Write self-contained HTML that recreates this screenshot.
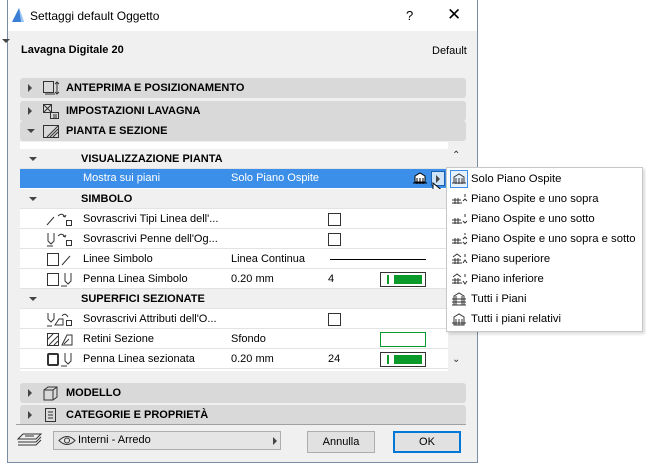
<!DOCTYPE html>
<html><head><meta charset="utf-8"><style>
*{margin:0;padding:0;box-sizing:border-box}
body{width:646px;height:463px;background:#fff;font-family:"Liberation Sans",sans-serif;font-size:11px;color:#000;position:relative;overflow:hidden}
.a{position:absolute}
.win{left:7px;top:0;width:471px;height:463px;border:1px solid #7a8ca3;border-top:none;background:#f0f0f0}
.title{left:8px;top:0;width:469px;height:31px;background:#fff}
.sec{position:absolute;left:20px;width:446px;height:20px;background:#d9d9d9;border-radius:3px;font-weight:bold;font-size:11px;line-height:20px}
.sec .t{position:absolute;left:46px}
.tri{position:absolute;width:0;height:0}
.tr{border-left:4px solid #444;border-top:4px solid transparent;border-bottom:4px solid transparent}
.td{border-top:4px solid #444;border-left:4px solid transparent;border-right:4px solid transparent}
.row{position:absolute;left:20px;width:428px;height:20px;line-height:20px;border-bottom:1px solid #e3e3e3;background:#fff}
.hdr{background:#f0f0f0;font-weight:bold}
.cb{position:absolute;left:308px;top:4px;width:13px;height:13px;border:1px solid #333;background:#fff}
.pen{position:absolute;left:360px;top:3px;width:46px;height:15px;border:1px solid #333;background:#fff}
.mi{position:absolute;left:0;width:196px;height:20px;line-height:20px;padding-left:24px;font-size:11.3px}
</style></head><body>
<div class="a win"></div>
<div class="a title"></div>
<svg class="a" style="left:10px;top:7px" width="16" height="16"><path d="M2 15 L9 1 L14 15 Z" fill="#3a7fd5"/><path d="M9 1 L14 15 L11 15 Z" fill="#9cc4f0"/></svg>
<div class="a" style="left:30px;top:9px;font-size:12px">Settaggi default Oggetto</div>
<div class="a" style="left:406px;top:8px;font-size:13px">?</div>
<div class="a" style="left:447px;top:5px;font-size:17px">✕</div>
<div class="tri td" style="left:2px;top:39px"></div>
<div class="a" style="left:21px;top:44px;font-weight:bold">Lavagna Digitale 20</div>
<div class="a" style="left:432px;top:45px">Default</div>

<div class="sec" style="top:78px"><div class="tri tr" style="left:8px;top:6px"></div><svg class="a" style="left:22px;top:2px" width="18" height="16" fill="none" stroke="#333"><rect x="1.5" y="1.5" width="10" height="11"/><path d="M3 14h10M15 2v12M13 4l2-2 2 2M13 12l2 2 2-2"/></svg><span class="t">ANTEPRIMA E POSIZIONAMENTO</span></div>
<div class="sec" style="top:101px"><div class="tri tr" style="left:8px;top:6px"></div><svg class="a" style="left:22px;top:2px" width="18" height="16" fill="none" stroke="#333"><rect x="1.5" y="1.5" width="8" height="8"/><path d="M1.5 1.5l8 8M9.5 1.5l-8 8"/><rect x="8.5" y="9.5" width="8" height="6"/><path d="M11 12h4M11 14h4"/></svg><span class="t">IMPOSTAZIONI LAVAGNA</span></div>
<div class="sec" style="top:121px"><div class="tri td" style="left:7px;top:8px"></div><svg class="a" style="left:22px;top:2px" width="18" height="16" fill="none" stroke="#333"><rect x="1.5" y="2.5" width="15" height="12"/><path d="M8 14l8-8M11 14l5-5M5 14l11-11"/></svg><span class="t">PIANTA E SEZIONE</span></div>

<div class="a" style="left:20px;top:142px;width:446px;height:229px;background:#fff"></div>
<div class="a" style="left:448px;top:142px;width:18px;height:229px;background:#f0f0f0"></div>
<div class="a" style="left:452px;top:150px;font-size:10px;color:#333">⌃</div>
<div class="a" style="left:452px;top:354px;font-size:10px;color:#333">⌄</div>

<div class="row hdr" style="top:149px"><div class="tri td" style="left:9px;top:8px"></div><span class="a" style="left:61px">VISUALIZZAZIONE PIANTA</span></div>
<div class="row" style="top:169px;background:#3c8fe8;color:#fff;height:19px;border:none;line-height:19px"><span class="a" style="left:63px">Mostra sui piani</span><span class="a" style="left:211px">Solo Piano Ospite</span>
<svg class="a" style="left:392px;top:2px" width="16" height="16" fill="none" stroke="#000"><path d="M3 5l5-3 5 3v6H3z" fill="#fff"/><path d="M1 12h14M5 7v6M8 7v6M11 7v6"/></svg>
<div class="a" style="left:411px;top:2px;width:14px;height:15px;background:#cfe3f8;border:1px solid #1b5fb0"></div><div class="tri tr" style="left:416px;top:6px"></div></div>
<svg class="a" style="left:432px;top:182px" width="16" height="20"><path d="M1 1v14l4-4 3 6 2-1-3-6h5z" fill="#fff" stroke="#000"/></svg>

<div class="row hdr" style="top:189px"><div class="tri td" style="left:9px;top:8px"></div><span class="a" style="left:61px">SIMBOLO</span></div>
<div class="row" style="top:209px"><svg class="a" style="left:26px;top:3px" width="30" height="15" fill="none" stroke="#333"><path d="M1 13l7-8M12 4q4-4 7 1M17 4l2 1 1-2"/><rect x="20.5" y="8.5" width="5" height="5"/></svg><span class="a" style="left:63px">Sovrascrivi Tipi Linea dell'...</span><div class="cb"></div></div>
<div class="row" style="top:229px"><svg class="a" style="left:26px;top:3px" width="30" height="15" fill="none" stroke="#333"><path d="M2 1v8l3 3 3-3V1M1 14h6M12 4q4-4 7 1M17 4l2 1 1-2"/><rect x="20.5" y="8.5" width="5" height="5"/></svg><span class="a" style="left:63px">Sovrascrivi Penne dell'Og...</span><div class="cb"></div></div>
<div class="row" style="top:249px"><svg class="a" style="left:26px;top:3px" width="30" height="15" fill="none" stroke="#333"><rect x="1.5" y="1.5" width="11" height="12"/><path d="M16 13l8-9"/></svg><span class="a" style="left:63px">Linee Simbolo</span><span class="a" style="left:211px">Linea Continua</span><div class="a" style="left:310px;top:10px;width:96px;height:1px;background:#000"></div></div>
<div class="row" style="top:269px"><svg class="a" style="left:26px;top:3px" width="30" height="15" fill="none" stroke="#333"><rect x="1.5" y="1.5" width="11" height="12"/><path d="M19 1v8l3 3 3-3V1M15 14h6"/></svg><span class="a" style="left:63px">Penna Linea Simbolo</span><span class="a" style="left:211px">0.20 mm</span><span class="a" style="left:308px">4</span><div class="pen"><div class="a" style="left:6px;top:2px;width:2px;height:9px;background:#0a9a2a"></div><div class="a" style="left:13px;top:2px;width:28px;height:9px;background:#0a9a2a"></div></div></div>
<div class="row hdr" style="top:289px"><div class="tri td" style="left:9px;top:8px"></div><span class="a" style="left:61px">SUPERFICI SEZIONATE</span></div>
<div class="row" style="top:309px"><svg class="a" style="left:26px;top:3px" width="30" height="15" fill="none" stroke="#333"><path d="M2 1v6l3 3 3-3V1M1 14h5M9 13l4-6h4v6zM16 4q3-4 6 1"/><rect x="20.5" y="8.5" width="5" height="5"/></svg><span class="a" style="left:63px">Sovrascrivi Attributi dell'O...</span><div class="cb"></div></div>
<div class="row" style="top:329px"><svg class="a" style="left:26px;top:3px" width="30" height="15" fill="none" stroke="#333"><rect x="1.5" y="1.5" width="11" height="12"/><path d="M1 8l6-6M3 13l9-9M8 13l4-4"/><path d="M16 13l5-10h5v10z M18 12l5-5"/></svg><span class="a" style="left:63px">Retini Sezione</span><span class="a" style="left:211px">Sfondo</span><div class="a" style="left:360px;top:3px;width:46px;height:15px;border:1px solid #0a9a2a"></div></div>
<div class="row" style="top:349px"><svg class="a" style="left:26px;top:3px" width="30" height="15" fill="none" stroke="#333" stroke-width="2"><rect x="2" y="2" width="10" height="11" rx="1"/><path d="M19 1v8l3 3 3-3V1M15 14h6" stroke-width="1"/></svg><span class="a" style="left:63px">Penna Linea sezionata</span><span class="a" style="left:211px">0.20 mm</span><span class="a" style="left:308px">24</span><div class="pen"><div class="a" style="left:6px;top:2px;width:2px;height:9px;background:#0a9a2a"></div><div class="a" style="left:13px;top:2px;width:28px;height:9px;background:#0a9a2a"></div></div></div>

<div class="sec" style="top:383px"><div class="tri tr" style="left:8px;top:6px"></div><svg class="a" style="left:22px;top:2px" width="18" height="16" fill="none" stroke="#333"><path d="M2 5l4-3h9v10l-4 3H2z M2 5h9v10M11 5l4-3"/></svg><span class="t">MODELLO</span></div>
<div class="sec" style="top:405px"><div class="tri tr" style="left:8px;top:6px"></div><svg class="a" style="left:22px;top:2px" width="18" height="16" fill="none" stroke="#333"><rect x="3.5" y="1.5" width="10" height="13"/><path d="M6 5h5M6 8h5M6 11h5"/></svg><span class="t">CATEGORIE E PROPRIETÀ</span></div>
<div class="a" style="left:16px;top:424px;width:450px;height:1px;background:#a0a0a0"></div>

<svg class="a" style="left:17px;top:432px" width="26" height="16" fill="none" stroke="#333"><path d="M6 2h18l-5 5H1zM1 10h18l5-5M1 13h18l5-5"/><path d="M8 4h9" /></svg>
<div class="a" style="left:53px;top:431px;width:228px;height:19px;border:1px solid #adadad;background:#e5e5e5"></div>
<svg class="a" style="left:58px;top:435px" width="18" height="11" fill="none" stroke="#333"><path d="M1 5.5q8-8 16 0q-8 8-16 0z"/><circle cx="9" cy="5.5" r="2.5"/></svg>
<div class="a" style="left:78px;top:434px;font-size:11px">Interni - Arredo</div>
<div class="tri tr" style="left:273px;top:437px"></div>
<div class="a" style="left:307px;top:431px;width:68px;height:22px;border:1px solid #adadad;background:#e1e1e1;text-align:center;line-height:20px">Annulla</div>
<div class="a" style="left:393px;top:431px;width:68px;height:22px;border:2px solid #0078d7;background:#e1e1e1;text-align:center;line-height:18px">OK</div>

<div class="a" style="left:446px;top:167px;width:197px;height:165px;background:#fff;border:1px solid #c8c8c8;box-shadow:2px 2px 3px rgba(0,0,0,.15)">
<div class="a" style="left:3px;top:2px;width:18px;height:18px;border:1px solid #3c8fe8;background:#e5f1fb"></div>
<div class="mi" style="top:1px">Solo Piano Ospite</div>
<div class="mi" style="top:21px">Piano Ospite e uno sopra</div>
<div class="mi" style="top:41px">Piano Ospite e uno sotto</div>
<div class="mi" style="top:61px">Piano Ospite e uno sopra e sotto</div>
<div class="mi" style="top:81px">Piano superiore</div>
<div class="mi" style="top:101px">Piano inferiore</div>
<div class="mi" style="top:121px">Tutti i Piani</div>
<div class="mi" style="top:141px">Tutti i piani relativi</div>
<svg class="a" style="left:4px;top:3px" width="18" height="160" fill="none" stroke="#333">
<g><path d="M3 6l5-3 5 3v6H3z"/><path d="M1 12h14M5 7v6M8 7v6M11 7v6"/></g>
<g transform="translate(0,20)"><path d="M1 12h10M4 7v6M7 7v6M1 9h9"/><path d="M14 3v3M12 10l2-2 2 2" /></g>
<g transform="translate(0,40)"><path d="M1 12h10M4 7v6M7 7v6M1 9h9"/><path d="M14 3v3M12 10l2 2 2-2" /></g>
<g transform="translate(0,60)"><path d="M1 12h10M4 7v6M7 7v6M1 9h9"/><path d="M14 2v2M12 8l2-2 2 2M12 11l2 2 2-2" /></g>
<g transform="translate(0,80)"><path d="M1 12h10M4 7v6M7 7v6M1 9h9M2 6l4-3 4 3"/><path d="M14 3v3M12 12l2-3 2 3" /></g>
<g transform="translate(0,100)"><path d="M1 12h10M4 7v6M7 7v6M1 9h9M2 6l4-3 4 3"/><path d="M14 3v3M12 10l2 3 2-3" /></g>
<g transform="translate(0,120)"><path d="M3 5l5-3 5 3v9H3zM1 14h14M1 8h14M1 11h14M5 5v9M11 5v9"/></g>
<g transform="translate(0,140)"><path d="M3 6l5-3 5 3v8H3z M1 12h14M5 8v6M8 8v6M11 8v6"/></g>
</svg>
</div>
</body></html>
